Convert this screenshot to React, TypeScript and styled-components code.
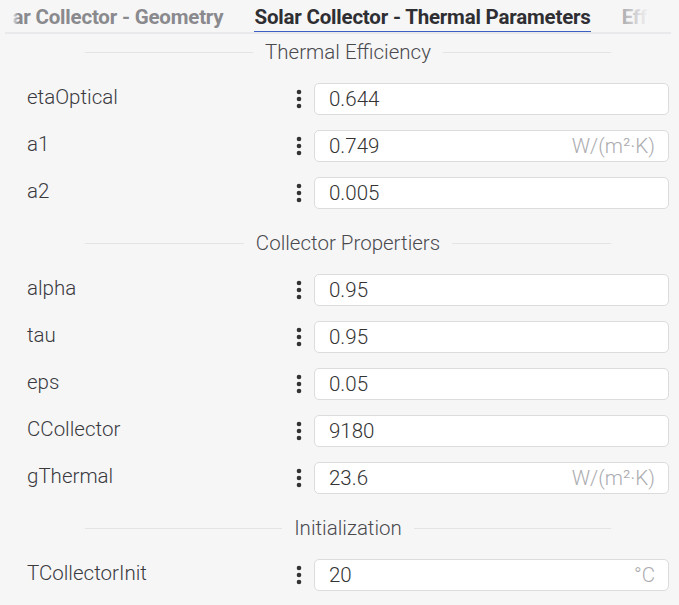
import React, { useLayoutEffect, useRef } from 'react';
import styled, { createGlobalStyle } from 'styled-components';

const GlobalStyle = createGlobalStyle`
  html, body {
    margin: 0;
    padding: 0;
    background: #f6f6f7;
  }

  body {
    font-family: Roboto, "Open Sans", sans-serif;
    color: #333;
  }
`;

interface Field {
  name: string;
  value: string;
  unit?: string;
}

interface Section {
  title: string;
  fields: Field[];
}

const TABS = [
  'Solar Collector - Geometry',
  'Solar Collector - Thermal Parameters',
  'Efficiency Curve',
];
const ACTIVE_TAB = 1;

const SECTIONS: Section[] = [
  {
    title: 'Thermal Efficiency',
    fields: [
      { name: 'etaOptical', value: '0.644' },
      { name: 'a1', value: '0.749', unit: 'W/(m²·K)' },
      { name: 'a2', value: '0.005' },
    ],
  },
  {
    title: 'Collector Propertiers',
    fields: [
      { name: 'alpha', value: '0.95' },
      { name: 'tau', value: '0.95' },
      { name: 'eps', value: '0.05' },
      { name: 'CCollector', value: '9180' },
      { name: 'gThermal', value: '23.6', unit: 'W/(m²·K)' },
    ],
  },
  {
    title: 'Initialization',
    fields: [{ name: 'TCollectorInit', value: '20', unit: '°C' }],
  },
];

const Page = styled.div`
  width: 679px;
  height: 605px;
  overflow: hidden;
`;

const TabBar = styled.div`
  position: relative;
  margin: 0 8px 0 5px;
  border-bottom: 2px solid #e9e9eb;
`;

const TabScroller = styled.div`
  position: relative;
  display: flex;
  overflow-x: auto;
  scrollbar-width: none;

  &::-webkit-scrollbar {
    display: none;
  }
`;

const Tab = styled.div<{ $active?: boolean }>`
  flex: 0 0 auto;
  margin: 0 15.5px -2px;
  height: 31px;
  line-height: 34px;
  font-size: 20.5px;
  font-weight: 700;
  letter-spacing: -0.2px;
  white-space: nowrap;
  color: ${(p) => (p.$active ? '#2f2f33' : '#8a8a8e')};
  border-bottom: 3px solid ${(p) => (p.$active ? '#3c5fc4' : 'transparent')};
`;

const Fade = styled.div<{ $side: 'left' | 'right' }>`
  position: absolute;
  top: 0;
  height: 29px;
  pointer-events: none;
  ${(p) =>
    p.$side === 'right'
      ? `right: 0;
         width: 62px;
         background: linear-gradient(to right, rgba(246, 246, 247, 0), #f6f6f7 65%);`
      : `left: 0;
         width: 14px;
         background: linear-gradient(to left, rgba(246, 246, 247, 0), #f6f6f7 55%);`}
`;

const Form = styled.div`
  padding: 0 10px 0 27px;
`;

const SectionHeader = styled.div<{ $first?: boolean }>`
  display: flex;
  align-items: center;
  gap: 12px;
  width: 82%;
  margin: ${(p) => (p.$first ? '7px' : '16px')} auto 12px;
  height: 22px;
  font-size: 20.5px;
  font-weight: 300;
  color: #4a4a4e;
  white-space: nowrap;

  &::before,
  &::after {
    content: '';
    flex: 1;
    height: 1px;
    background: #e4e4e7;
  }
`;

const Row = styled.div`
  display: flex;
  align-items: center;
  height: 47px;
`;

const Label = styled.div`
  flex: 0 0 261px;
  font-size: 20.5px;
  font-weight: 300;
  color: #3a3a3e;
  margin-top: -3px;
`;

const MenuButton = styled.div`
  flex: 0 0 22px;
  display: flex;
  justify-content: center;
  align-items: center;
  margin-right: 4px;
  color: #333;
`;

const InputBox = styled.div`
  flex: 1;
  display: flex;
  align-items: center;
  height: 30px;
  padding: 0 13px 0 14px;
  background: #fff;
  border: 1px solid #dcdcdf;
  border-radius: 5px;
  font-size: 20.5px;
  font-weight: 300;
`;

const Value = styled.span`
  flex: 1;
  color: #333;
`;

const Unit = styled.span`
  color: #acacb0;
`;

const DotsIcon = () => (
  <svg width="6" height="20" viewBox="0 0 6 20" fill="currentColor">
    <circle cx="3" cy="3" r="2.3" />
    <circle cx="3" cy="10" r="2.3" />
    <circle cx="3" cy="17" r="2.3" />
  </svg>
);

const Tabs = () => {
  const scroller = useRef<HTMLDivElement>(null);
  const active = useRef<HTMLDivElement>(null);

  useLayoutEffect(() => {
    if (scroller.current && active.current) {
      scroller.current.scrollLeft = active.current.offsetLeft - 249;
    }
  }, []);

  return (
    <TabBar>
      <TabScroller ref={scroller}>
        {TABS.map((t, i) => (
          <Tab key={t} $active={i === ACTIVE_TAB} ref={i === ACTIVE_TAB ? active : undefined}>
            {t}
          </Tab>
        ))}
      </TabScroller>
      <Fade $side="left" />
      <Fade $side="right" />
    </TabBar>
  );
};

const App = () => (
  <Page>
    <GlobalStyle />
    <Tabs />
    <Form>
      {SECTIONS.map((s, si) => (
        <div key={s.title}>
          <SectionHeader $first={si === 0}>{s.title}</SectionHeader>
          {s.fields.map((f) => (
            <Row key={f.name}>
              <Label>{f.name}</Label>
              <MenuButton>
                <DotsIcon />
              </MenuButton>
              <InputBox>
                <Value>{f.value}</Value>
                {f.unit && <Unit>{f.unit}</Unit>}
              </InputBox>
            </Row>
          ))}
        </div>
      ))}
    </Form>
  </Page>
);

export default App;
